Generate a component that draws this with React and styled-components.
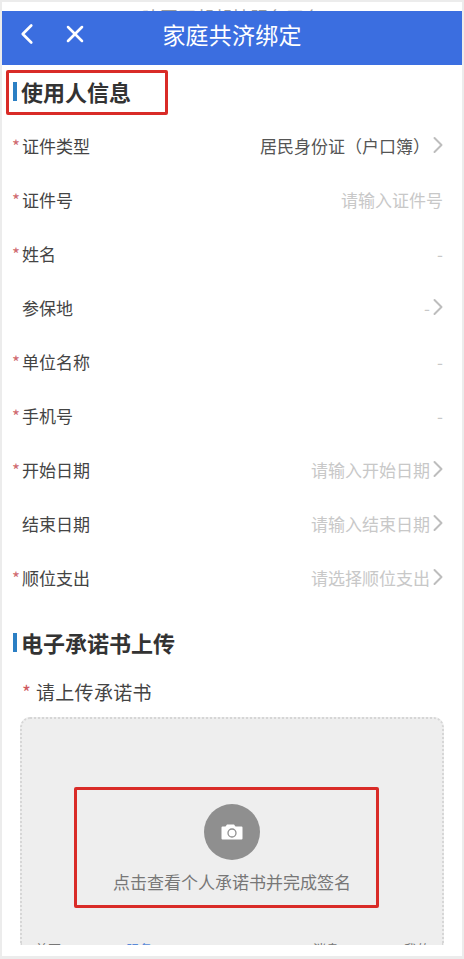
import React from 'react';
import styled, { createGlobalStyle } from 'styled-components';
import { ChevronLeft, ChevronRight, X } from 'lucide-react';

const GlobalStyle = createGlobalStyle`
  html, body {
    margin: 0;
    padding: 0;
    background: #fff;
  }
  body {
    font-family: "Noto Sans CJK SC", "Liberation Sans", sans-serif;
  }
`;

const Page = styled.div`
  width: 464px;
  height: 959px;
  box-sizing: border-box;
  border: 2px solid #ececec;
  border-bottom-width: 3px;
  background: #fff;
  overflow: hidden;
  position: relative;
`;

const StatusStrip = styled.div`
  height: 9px;
  overflow: hidden;
  text-align: center;
  font-size: 18px;
  line-height: 30px;
  color: #999;
`;

const Header = styled.header`
  height: 54px;
  box-sizing: border-box;
  padding-bottom: 9px;
  background: #3b6ee0;
  color: #fff;
  display: grid;
  grid-template-columns: 100px 1fr 100px;
  align-items: center;
`;

const HeaderIcons = styled.div`
  display: flex;
  align-items: center;
  gap: 17px;
  padding-left: 8px;
`;

const Title = styled.h1`
  margin: 0;
  text-align: center;
  font-size: 23px;
  font-weight: 400;
  letter-spacing: 0.2px;
  white-space: nowrap;
`;

const Section = styled.section`
  padding: ${(p) => p.$top}px 0 0 11px;
`;

const SectionTitle = styled.h2`
  margin: 0;
  display: flex;
  align-items: center;
  gap: 4px;
  font-size: 22px;
  line-height: 30px;
  font-weight: 700;
  color: #333;
  &::before {
    content: '';
    width: 4px;
    height: 19px;
    background: #2b7fc4;
  }
`;

const List = styled.div`
  padding-top: 12px;
`;

const Row = styled.div`
  height: 54px;
  display: flex;
  align-items: center;
  justify-content: space-between;
  padding-right: 19px;
  font-size: 17px;
`;

const Label = styled.span`
  display: flex;
  align-items: center;
  color: #444;
  padding-left: 9px;
  position: relative;
`;

const Star = styled.i`
  position: absolute;
  left: -1px;
  top: 0;
  font-style: normal;
  font-size: 17px;
  color: #cf6a6f;
`;

const Value = styled.span`
  display: flex;
  align-items: center;
  color: ${(p) => (p.$filled ? '#555' : '#c8c8c8')};
  white-space: nowrap;
`;

const Chevron = styled(ChevronRight)`
  margin: 0 -8.5px 0 -6.5px;
  color: #bdbdbd;
`;

const UploadLabel = styled.div`
  margin: 22px 0 0 9px;
  font-size: 19px;
  line-height: 26px;
  letter-spacing: 0.3px;
  color: #444;
  display: flex;
  span {
    width: 14px;
    color: #cf5a5f;
  }
`;

const UploadBox = styled.div`
  margin: 12px 0 0 7px;
  width: 424px;
  height: 228px;
  box-sizing: border-box;
  padding-top: 85px;
  border: 2px dotted #d6d6d6;
  border-bottom: none;
  border-radius: 10px 10px 0 0;
  background: #eeeeee;
  display: flex;
  flex-direction: column;
  align-items: center;
  position: relative;
  overflow: hidden;
`;

const CameraCircle = styled.div`
  width: 56px;
  height: 56px;
  border-radius: 50%;
  background: #8f8f8f;
  display: flex;
  align-items: center;
  justify-content: center;
`;

const UploadHint = styled.div`
  margin-top: 8px;
  font-size: 17px;
  line-height: 28px;
  color: #777;
`;

const TabPeek = styled.div`
  position: absolute;
  left: 13px;
  right: 12px;
  bottom: 0;
  height: 3px;
  overflow: hidden;
  display: flex;
  font-size: 13px;
  line-height: 13px;
  color: #777;
  span:nth-child(2) {
    margin-left: 65px;
    color: #5a8ad8;
  }
  span:nth-child(3) {
    margin-left: auto;
  }
  span:nth-child(4) {
    margin-left: 65px;
  }
`;

const Highlight = styled.div`
  position: absolute;
  left: ${(p) => p.$x}px;
  top: ${(p) => p.$y}px;
  width: ${(p) => p.$w}px;
  height: ${(p) => p.$h}px;
  box-sizing: border-box;
  border: 3px solid #d92b27;
  border-radius: 2px;
  pointer-events: none;
`;

const rows = [
  { label: '证件类型', req: true, value: '居民身份证（户口簿）', filled: true, arrow: true },
  { label: '证件号', req: true, value: '请输入证件号' },
  { label: '姓名', req: true, value: '-' },
  { label: '参保地', value: '-', arrow: true },
  { label: '单位名称', req: true, value: '-' },
  { label: '手机号', req: true, value: '-' },
  { label: '开始日期', req: true, value: '请输入开始日期', arrow: true },
  { label: '结束日期', value: '请输入结束日期', arrow: true },
  { label: '顺位支出', req: true, value: '请选择顺位支出', arrow: true },
];

const CameraIcon = () => (
  <svg width="22" height="16" viewBox="0 0 22 16">
    <path
      fill="#fff"
      d="M1.5 2.5h3L6 .5h7l1.5 2h6a1 1 0 0 1 1 1v11a1 1 0 0 1-1 1h-19a1 1 0 0 1-1-1v-11a1 1 0 0 1 1-1z"
    />
    <circle cx="11" cy="9" r="4" fill="#fff" stroke="#8f8f8f" strokeWidth="1.3" />
  </svg>
);

export default function App() {
  return (
    <>
      <GlobalStyle />
      <Page>
        <StatusStrip>建国互帮帮扶服务平台</StatusStrip>
        <Header>
          <HeaderIcons>
            <ChevronLeft size={34} strokeWidth={1.9} />
            <X size={28} strokeWidth={2.2} />
          </HeaderIcons>
          <Title>家庭共济绑定</Title>
        </Header>

        <Section $top={11}>
          <SectionTitle>使用人信息</SectionTitle>
          <List>
            {rows.map((row) => (
              <Row key={row.label}>
                <Label>
                  {row.req && <Star>*</Star>}
                  {row.label}
                </Label>
                <Value $filled={row.filled}>
                  {row.value}
                  {row.arrow && <Chevron size={28} strokeWidth={1.7} />}
                </Value>
              </Row>
            ))}
          </List>
        </Section>

        <Section $top={23}>
          <SectionTitle>电子承诺书上传</SectionTitle>
          <UploadLabel>
            <span>*</span>
            请上传承诺书
          </UploadLabel>
          <UploadBox>
            <CameraCircle>
              <CameraIcon />
            </CameraCircle>
            <UploadHint>点击查看个人承诺书并完成签名</UploadHint>
            <TabPeek>
              <span>首页</span>
              <span>服务</span>
              <span>消息</span>
              <span>我的</span>
            </TabPeek>
          </UploadBox>
        </Section>

        <Highlight $x={4} $y={68} $w={162} $h={45} />
        <Highlight $x={72} $y={785} $w={305} $h={121} />
      </Page>
    </>
  );
}
